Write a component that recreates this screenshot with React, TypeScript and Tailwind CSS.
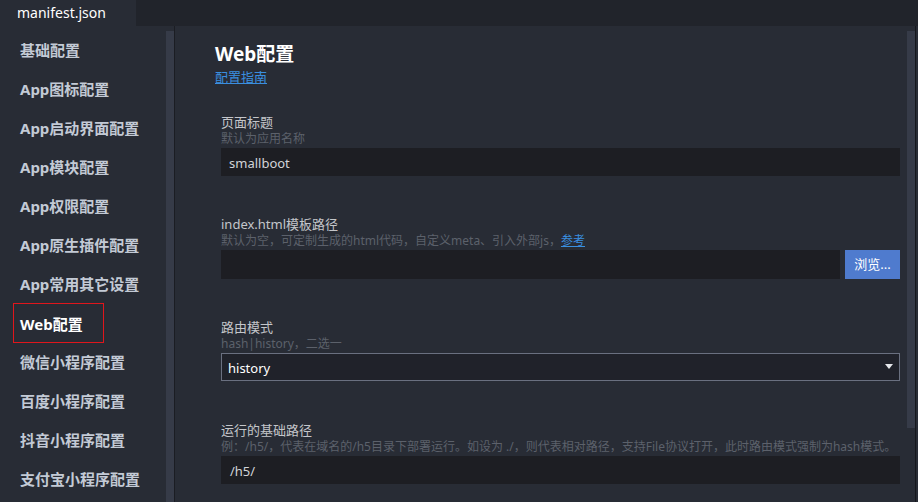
import React from "react";

const items = [
  "基础配置",
  "App图标配置",
  "App启动界面配置",
  "App模块配置",
  "App权限配置",
  "App原生插件配置",
  "App常用其它设置",
  "Web配置",
  "微信小程序配置",
  "百度小程序配置",
  "抖音小程序配置",
  "支付宝小程序配置",
];

const font = { fontFamily: '"Noto Sans", "Noto Sans CJK SC", sans-serif' };

function Label({ children }: { children: React.ReactNode }) {
  return <div className="text-[13px] leading-[18px] text-[#c4c6ca]">{children}</div>;
}
function Hint({ children }: { children: React.ReactNode }) {
  return <div className="text-[12px] leading-[16px] text-[#5c616b] whitespace-nowrap">{children}</div>;
}

export default function App() {
  return (
    <div className="w-[918px] h-[502px] overflow-hidden bg-[#282c35] flex flex-col" style={font}>
      <div className="h-[26px] bg-[#21242b] flex shrink-0">
        <div className="w-[136px] bg-[#282c35] text-white text-[14px] leading-[26px] pl-[17px]">manifest.json</div>
      </div>
      <div className="flex flex-1 min-h-0">
        <div className="w-[166px] pt-[4px] shrink-0">
          {items.map((t) =>
            t === "Web配置" ? (
              <div
                key={t}
                className="ml-[13px] w-[91px] h-[40px] border border-[#e0161c] pl-[6px] pt-[2px] flex items-center text-[15px] font-bold text-white -mb-[1px]"
              >
                {t}
              </div>
            ) : (
              <div key={t} className="ml-[13px] pl-[7px] pt-[2px] h-[39px] flex items-center text-[15px] font-bold text-[#c3cad5] whitespace-nowrap">
                {t}
              </div>
            )
          )}
        </div>
        <div className="w-[8px] pt-[5px] shrink-0">
          <div className="h-full bg-[#363b48]" />
        </div>
        <div className="w-[1px] bg-[#1b1d23] shrink-0" />
        <div className="flex-1 min-w-0 pl-[40px] pr-[7px] pt-[15px]">
          <div className="text-[19px] leading-[26px] font-bold text-white">Web配置</div>
          <div className="mt-[1px] text-[13px] leading-[18px] text-[#3a8fe0] underline">配置指南</div>
          <div className="pl-[6px]">
            <div className="mt-[27px]">
              <Label>页面标题</Label>
              <Hint>默认为应用名称</Hint>
              <div className="mt-[1px] h-[28px] bg-[#1d1e23] pl-[8px] pt-[4px] flex items-center text-[13px] text-[#d2d4d8]">smallboot</div>
            </div>
            <div className="mt-[39px]">
              <Label>index.html模板路径</Label>
              <Hint>
                默认为空，可定制生成的html代码，自定义meta、引入外部js，
                <span className="text-[#3a8fe0] underline">参考</span>
              </Hint>
              <div className="mt-[1px] flex h-[29px]">
                <div className="flex-1 bg-[#1d1e23]" />
                <div className="ml-[5px] w-[55px] bg-[#4f7bce] text-white text-[13px] flex items-center justify-center">浏览...</div>
              </div>
            </div>
            <div className="mt-[39px]">
              <Label>路由模式</Label>
              <Hint>hash|history，二选一</Hint>
              <div className="mt-[1px] h-[28px] bg-[#20222a] border border-[#6a7080] pl-[6px] pr-[6px] flex items-center justify-between text-[13px] text-white">
                <span className="pt-[4px]">history</span>
                <svg width="8" height="6" viewBox="0 0 8 6">
                  <path d="M0 0 L8 0 L4 5 Z" fill="#e6e8ec" />
                </svg>
              </div>
            </div>
            <div className="mt-[40px]">
              <Label>运行的基础路径</Label>
              <Hint>例：/h5/，代表在域名的/h5目录下部署运行。如设为 ./，则代表相对路径，支持File协议打开，此时路由模式强制为hash模式。</Hint>
              <div className="mt-[1px] h-[28px] bg-[#1d1e23] pl-[9px] pt-[4px] flex items-center text-[13px] text-[#d2d4d8]">/h5/</div>
            </div>
          </div>
        </div>
        <div className="w-[8px] pt-[5px] shrink-0">
          <div className="h-[397px] bg-[#363b48]" />
        </div>
        <div className="w-[1px] bg-[#16181d] shrink-0" />
        <div className="w-[2px] shrink-0" />
      </div>
    </div>
  );
}
